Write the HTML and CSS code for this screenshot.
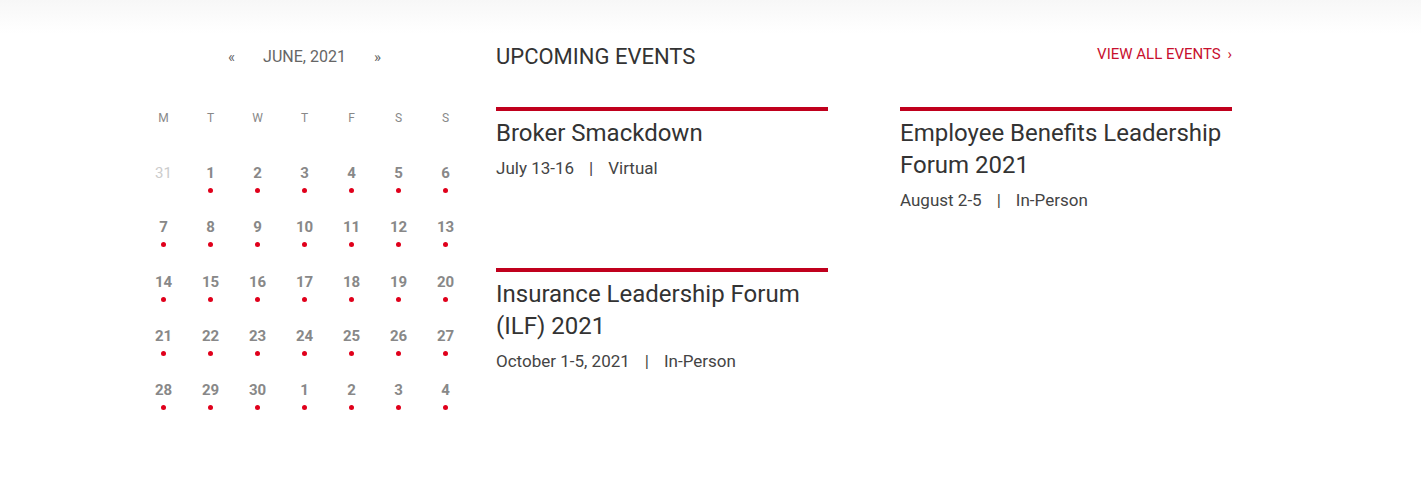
FILE: index.html
```html
<!DOCTYPE html>
<html lang="en">
<head>
    <meta charset="UTF-8">
    <title>Upcoming Events</title>
    <link rel="stylesheet" href="styles.css">
</head>
<body>
    <div class="page">
        <div class="calendar">
            <div class="cal-head">
                <span class="cal-nav">&laquo;</span>
                <span class="cal-month">JUNE, 2021</span>
                <span class="cal-nav">&raquo;</span>
            </div>
            <div class="cal-grid">
                <span class="cal-wd">M</span><span class="cal-wd">T</span><span class="cal-wd">W</span><span class="cal-wd">T</span><span class="cal-wd">F</span><span class="cal-wd">S</span><span class="cal-wd">S</span>

                <span class="cal-day cal-other">31</span>
                <span class="cal-day has-event">1</span>
                <span class="cal-day has-event">2</span>
                <span class="cal-day has-event">3</span>
                <span class="cal-day has-event">4</span>
                <span class="cal-day has-event">5</span>
                <span class="cal-day has-event">6</span>

                <span class="cal-day has-event">7</span>
                <span class="cal-day has-event">8</span>
                <span class="cal-day has-event">9</span>
                <span class="cal-day has-event">10</span>
                <span class="cal-day has-event">11</span>
                <span class="cal-day has-event">12</span>
                <span class="cal-day has-event">13</span>

                <span class="cal-day has-event">14</span>
                <span class="cal-day has-event">15</span>
                <span class="cal-day has-event">16</span>
                <span class="cal-day has-event">17</span>
                <span class="cal-day has-event">18</span>
                <span class="cal-day has-event">19</span>
                <span class="cal-day has-event">20</span>

                <span class="cal-day has-event">21</span>
                <span class="cal-day has-event">22</span>
                <span class="cal-day has-event">23</span>
                <span class="cal-day has-event">24</span>
                <span class="cal-day has-event">25</span>
                <span class="cal-day has-event">26</span>
                <span class="cal-day has-event">27</span>

                <span class="cal-day has-event">28</span>
                <span class="cal-day has-event">29</span>
                <span class="cal-day has-event">30</span>
                <span class="cal-day has-event">1</span>
                <span class="cal-day has-event">2</span>
                <span class="cal-day has-event">3</span>
                <span class="cal-day has-event">4</span>
            </div>
        </div>

        <div class="events">
            <div class="events-head">
                <h2 class="events-title">UPCOMING EVENTS</h2>
                <a class="events-all" href="#">VIEW ALL EVENTS <span class="chev">&rsaquo;</span></a>
            </div>
            <div class="event-grid">
                <div class="event">
                    <h3 class="event-name">Broker Smackdown</h3>
                    <p class="event-meta">July 13-16<span class="sep">|</span>Virtual</p>
                </div>
                <div class="event">
                    <h3 class="event-name">Employee Benefits Leadership Forum 2021</h3>
                    <p class="event-meta">August 2-5<span class="sep">|</span>In-Person</p>
                </div>
                <div class="event">
                    <h3 class="event-name">Insurance Leadership Forum (ILF) 2021</h3>
                    <p class="event-meta">October 1-5, 2021<span class="sep">|</span>In-Person</p>
                </div>
            </div>
        </div>
    </div>
</body>
</html>
```

FILE: styles.css
```css
body {
    margin: 0;
    font-family: Roboto, "Liberation Sans", sans-serif;
    color: #333;
    background: linear-gradient(#f7f7f7, #fff 34px) no-repeat;
    min-height: 480px;
}

.page {
    display: flex;
    align-items: flex-start;
    gap: 27px;
    padding: 45px 0 0 140px;
}

/* calendar */
.calendar {
    width: 329px;
}

.cal-head {
    display: flex;
    justify-content: center;
    gap: 28px;
    line-height: 24px;
    font-size: 16px;
    color: #666;
}

.cal-nav {
    font-size: 15px;
    color: #666;
}

.cal-grid {
    display: grid;
    grid-template-columns: repeat(7, 47px);
    margin-top: 39px;
}

.cal-wd {
    text-align: center;
    font-size: 12px;
    line-height: 20px;
    color: #888;
    margin-bottom: 35px;
}

.cal-day {
    position: relative;
    height: 54.25px;
    text-align: center;
    font-size: 15px;
    font-weight: 700;
    line-height: 20px;
    color: #888;
}

.cal-day.cal-other {
    font-weight: 400;
    color: #ccc;
}

.cal-day.has-event::after {
    content: "";
    position: absolute;
    left: 50%;
    top: 25px;
    width: 5px;
    height: 5px;
    margin-left: -2.5px;
    border-radius: 50%;
    background: #e0001b;
}

/* events */
.events {
    width: 736px;
}

.events-head {
    display: flex;
    justify-content: space-between;
    align-items: flex-start;
}

.events-title {
    margin: 0;
    font-size: 22px;
    font-weight: 400;
    line-height: 24px;
    color: #333;
}

.events-all {
    font-size: 15px;
    line-height: 18px;
    color: #c8102e;
    text-decoration: none;
}

.events-all .chev {
    margin-left: 3px;
}

.event-grid {
    display: grid;
    grid-template-columns: 332px 332px;
    column-gap: 72px;
    row-gap: 56px;
    margin-top: 38px;
}

.event {
    border-top: 4px solid #c0001d;
}

.event-name {
    margin: 6px 0 0;
    font-size: 24px;
    font-weight: 400;
    line-height: 32px;
    color: #333;
}

.event-meta {
    margin: 7px 0 0;
    font-size: 17px;
    line-height: 24px;
    color: #444;
}

.event-meta .sep {
    margin: 0 15px;
}
```
